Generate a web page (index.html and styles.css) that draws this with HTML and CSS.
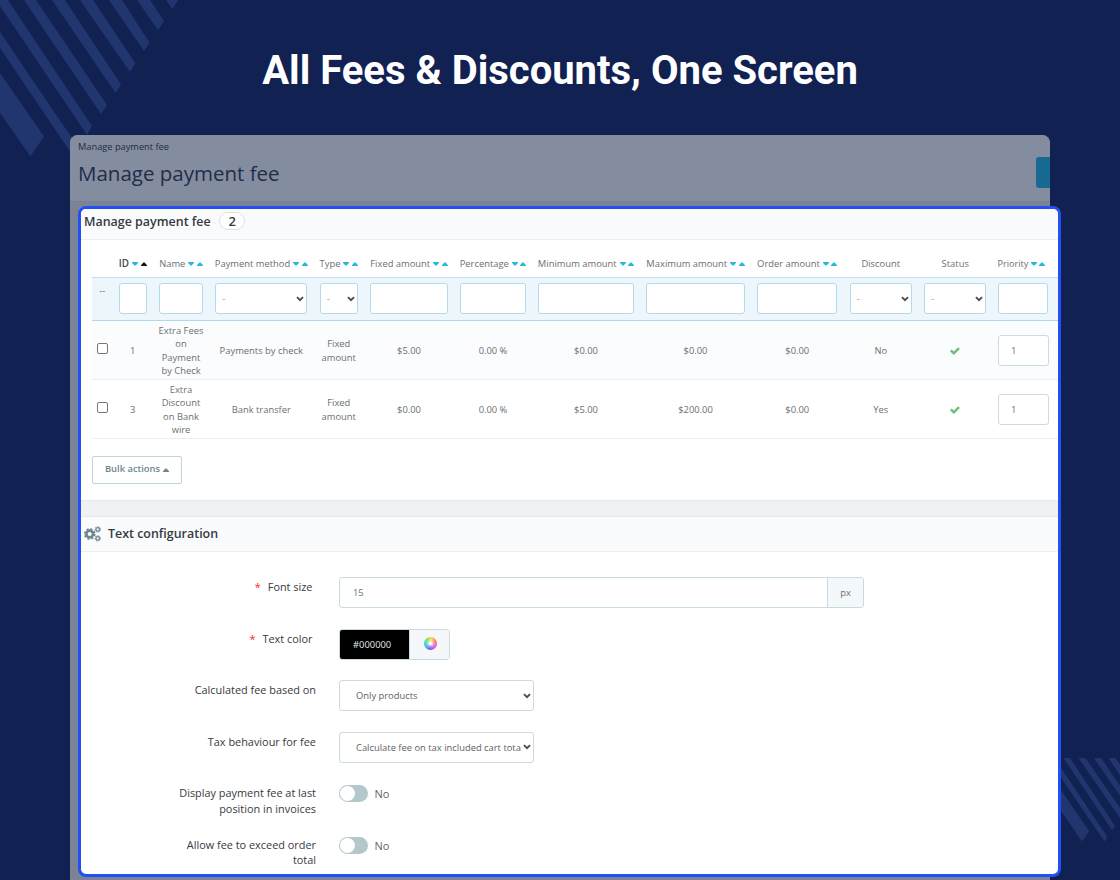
FILE: index.html
```html
<!DOCTYPE html>
<html lang="en">
<head>
<meta charset="utf-8">
<title>All Fees &amp; Discounts, One Screen</title>
<link rel="stylesheet" href="styles.css">
</head>
<body>
<svg width="0" height="0" class="defs">
  <symbol id="down" viewBox="0 0 6 4"><path d="M0 0H6V.7L3.6 3.6H2.4L0 .7Z"/></symbol>
  <symbol id="up" viewBox="0 0 6 4"><path d="M0 4H6V3.3L3.6 .4H2.4L0 3.3Z"/></symbol>
  <symbol id="chev" viewBox="0 0 8 6"><path d="M1 1.2L4 4.2L7 1.2" fill="none" stroke="#4a4d50" stroke-width="1.9"/></symbol>
  <symbol id="check" viewBox="0 0 10 8"><path d="M0 4.3L1.7 2.6L3.8 4.6L8.2 .3L9.9 1.9L3.8 7.9Z"/></symbol>
</svg>
<main class="stage">
  <svg class="stripes" width="1120" height="880" viewBox="0 0 1120 880">
    <path d="M0 73L44 136.500L30.500 156.500L0 113ZM0 32L78 147L73 156L0 48ZM0 0H8L92 126L87 135L0 6ZM24 0H36L107 105L101 114ZM52 0H65L121 84.500L115.500 93ZM80 0H93L135.500 63.500L130 72ZM109 0H122L149.500 42.500L144 51ZM137 0H150L164 21L158 30ZM166 0H178L172.500 9Z"/>
    <path d="M1055 781L1089 831L1082 841.500L1055 802ZM1055 759L1107.500 837L1104.500 841.500L1055 769ZM1063.500 758H1070L1115 826L1112 830ZM1078.500 758H1085.500L1120 808V818ZM1094 758H1101L1120 786V796ZM1108.500 758H1115.500L1120 764.500V775Z"/>
  </svg>
  <h1 class="headline">All Fees &amp; Discounts, One Screen</h1>
  <section class="backdrop">
    <header class="page-head">
      <div>
        <div class="crumb">Manage payment fee</div>
        <div class="page-title">Manage payment fee</div>
      </div>
      <div class="page-btn"></div>
    </header>
  </section>
  <section class="card">
    <div class="panel-head">Manage payment fee<span class="count">2</span></div>
    <div class="list">
      <div class="row thead">
        <div></div>
        <div class="sorted">ID<svg><use href="#down"/></svg><svg class="dark"><use href="#up"/></svg></div>
        <div>Name<svg><use href="#down"/></svg><svg><use href="#up"/></svg></div>
        <div>Payment method<svg><use href="#down"/></svg><svg><use href="#up"/></svg></div>
        <div>Type<svg><use href="#down"/></svg><svg><use href="#up"/></svg></div>
        <div>Fixed amount<svg><use href="#down"/></svg><svg><use href="#up"/></svg></div>
        <div>Percentage<svg><use href="#down"/></svg><svg><use href="#up"/></svg></div>
        <div>Minimum amount<svg><use href="#down"/></svg><svg><use href="#up"/></svg></div>
        <div>Maximum amount<svg><use href="#down"/></svg><svg><use href="#up"/></svg></div>
        <div>Order amount<svg><use href="#down"/></svg><svg><use href="#up"/></svg></div>
        <div>Discount</div>
        <div>Status</div>
        <div class="last prio">Priority<svg><use href="#down"/></svg><svg><use href="#up"/></svg></div>
      </div>
      <div class="row filters">
        <div class="dashes">--</div>
        <div><span class="field"></span></div>
        <div><span class="field"></span></div>
        <div><span class="field pick">-<svg><use href="#chev"/></svg></span></div>
        <div><span class="field pick">-<svg><use href="#chev"/></svg></span></div>
        <div><span class="field"></span></div>
        <div><span class="field"></span></div>
        <div><span class="field"></span></div>
        <div><span class="field"></span></div>
        <div><span class="field"></span></div>
        <div><span class="field pick">-<svg><use href="#chev"/></svg></span></div>
        <div><span class="field pick">-<svg><use href="#chev"/></svg></span></div>
        <div class="last"><span class="field"></span></div>
      </div>
      <div class="row item odd">
        <div class="tick"><span class="box"></span></div>
        <div>1</div>
        <div>Extra Fees<br>on<br>Payment<br>by Check</div>
        <div>Payments by check</div>
        <div>Fixed<br>amount</div>
        <div>$5.00</div>
        <div>0.00 %</div>
        <div>$0.00</div>
        <div>$0.00</div>
        <div>$0.00</div>
        <div>No</div>
        <div><svg class="check"><use href="#check"/></svg></div>
        <div class="last"><span class="order">1</span></div>
      </div>
      <div class="row item">
        <div class="tick"><span class="box"></span></div>
        <div>3</div>
        <div>Extra<br>Discount<br>on Bank<br>wire</div>
        <div>Bank transfer</div>
        <div>Fixed<br>amount</div>
        <div>$0.00</div>
        <div>0.00 %</div>
        <div>$5.00</div>
        <div>$200.00</div>
        <div>$0.00</div>
        <div>Yes</div>
        <div><svg class="check"><use href="#check"/></svg></div>
        <div class="last"><span class="order">1</span></div>
      </div>
      <div class="bulk">Bulk actions<svg><use href="#up"/></svg></div>
    </div>
    <div class="gap"></div>
    <div class="panel-head config">
      <svg class="gears" viewBox="0 0 17 16">
        <g fill="none" stroke="#6c868e">
          <circle cx="5.700" cy="8" r="3.400" stroke-width="2.700"/>
          <circle cx="5.700" cy="8" r="5.100" stroke-width="1.500" stroke-dasharray="2.200 1.805"/>
          <circle cx="13.700" cy="3.400" r="1.800" stroke-width="1.300"/>
          <circle cx="13.700" cy="3.400" r="2.800" stroke-width=".9" stroke-dasharray="1.250 1.265"/>
          <circle cx="13.700" cy="12.400" r="1.800" stroke-width="1.300"/>
          <circle cx="13.700" cy="12.400" r="2.800" stroke-width=".9" stroke-dasharray="1.250 1.265"/>
        </g>
      </svg>Text configuration</div>
    <div class="form">
      <div class="frow"><label class="req"><i>*</i>Font size</label><div class="group wide"><span class="input">15</span><span class="addon">px</span></div></div>
      <div class="frow"><label class="req"><i>*</i>Text color</label><div class="group"><span class="swatch">#000000</span><span class="addon wheelbox"><span class="wheel"></span></span></div></div>
      <div class="frow"><label>Calculated fee based on</label><div class="select"><span>Only products</span><svg><use href="#chev"/></svg></div></div>
      <div class="frow"><label>Tax behaviour for fee</label><div class="select"><span>Calculate fee on tax included cart tota</span><svg><use href="#chev"/></svg></div></div>
      <div class="frow"><label>Display payment fee at last<br>position in invoices</label><div class="switch"><span class="track"><span class="knob"></span></span>No</div></div>
      <div class="frow"><label>Allow fee to exceed order<br>total</label><div class="switch"><span class="track"><span class="knob"></span></span>No</div></div>
    </div>
  </section>
</main>
</body>
</html>
```
FILE: styles.css
```css
* { box-sizing: border-box; }
body { margin: 0; font-family: "Open Sans", sans-serif; }
.defs { position: absolute; }
.stage { position: relative; width: 1120px; height: 880px; overflow: hidden; background: #112151; padding-top: 46px; }
.stripes { position: absolute; left: 0; top: 0; fill: #21356f; }
.headline { position: relative; margin: 0; height: 89px; text-align: center; color: #fff; font: 700 40px/50px Roboto, sans-serif; white-space: nowrap; }
.backdrop { position: relative; width: 980px; height: 745px; margin-left: 70px; background: #7b8396; border-radius: 8px 8px 0 0; overflow: hidden; }
.page-head { height: 67px; background: #848c9f; border-bottom: 1px solid #777f92; display: flex; justify-content: space-between; padding: 5px 0 0 8px; color: #222d48; }
.crumb { font-size: 9.25px; line-height: 13px; }
.page-title { font-size: 20.5px; line-height: 30px; margin-top: 5px; }
.page-btn { width: 14px; height: 31px; margin-top: 17px; background: #176b93; border-radius: 3px 0 0 3px; }

/* Highlighted card floating above the dimmed page */
.card { position: absolute; left: 78px; top: 206px; width: 983px; height: 671px; border: 3px solid #2250f4; border-radius: 8px; background: #fff; overflow: hidden; }
.panel-head { display: flex; align-items: center; height: 30.5px; padding: 0 0 5px 3px; background: #fafbfc; border-bottom: 1px solid #eaf0f1; color: #363a41; font-size: 12.45px; font-weight: 600; }
.count { display: flex; align-items: center; justify-content: center; width: 26px; height: 18px; margin-left: 8.500px; border: 1px solid #dddfe0; border-radius: 9px; background: #fff; font-size: 13px; }
.list { height: 260px; padding: 11px 0 0 11px; }
.row { display: grid; grid-template-columns: 20.5px 40.5px 56px 104.500px 50.500px 90px 78px 108px 111px 92.500px 74.500px 74.500px 66px; align-items: center; text-align: center; color: #6b6f72; font-size: 9.4px; line-height: 13.500px; }
.row > div { padding: 0 6.250px; }
.row > .last { padding-left: 5.500px; padding-right: 10.500px; }
.thead { height: 26.500px; white-space: nowrap; }
.thead > div { display: flex; justify-content: center; align-items: center; padding: 0; }
.thead svg { flex: none; width: 6px; height: 4px; margin-left: 3px; fill: #25b9d7; }
.thead svg + svg { margin-left: 2.500px; }
.thead svg.dark { fill: #111; }
.row > .prio { padding: 0 8px 0 0; justify-content: center; font-size: 9.100px; }
.prio svg + svg { margin-left: 2px; }
.sorted { font-weight: 600; color: #44484c; font-size: 9.900px; }
.filters { height: 43.500px; background: #ecf6fb; border-top: 1.500px solid #bddff0; border-bottom: 1px solid #aedaee; }
.row > .dashes { padding: 6px 0 0; align-self: start; }
.field { display: block; height: 31px; background: #fff; border: 1px solid #b3dbee; border-radius: 3px; }
.pick { display: flex; justify-content: space-between; align-items: center; padding: 0 2px 0 6px; color: #999da0; }
.pick svg { width: 8px; height: 6px; }
.item { height: 59px; border-bottom: 1px solid #eceef0; white-space: nowrap; }
.row.item > div { padding: 2px 0 0; }
.odd { background: #fbfcfe; }
.row.item > .last { padding: 1.500px 9.500px 0 5px; }
.box { display: block; width: 11px; height: 11px; margin: -4px auto 0; border: 1px solid #767676; border-radius: 2px; background: #fff; }
.check { display: block; width: 10px; height: 8px; margin: auto; fill: #6cc07a; }
.order { display: flex; align-items: center; height: 31px; padding-left: 12.500px; border: 1px solid #cbdde1; border-radius: 3px; background: #fff; }
.bulk { display: flex; align-items: center; justify-content: center; width: 90px; height: 28px; margin-top: 17px; padding-bottom: 1.500px; border: 1px solid #c0d5db; border-radius: 2px; color: #6c868e; font-size: 9.400px; font-weight: 600; }
.bulk svg { width: 6px; height: 4px; margin: 2px 0 0 3px; fill: #6c868e; }
.gap { height: 17px; background: #eff1f2; border-top: 1px solid #e5e7e9; border-bottom: 1px solid #e5e7e9; }
.config { height: 35.500px; padding-bottom: 0; }
.gears { width: 17px; height: 16px; margin-right: 7px; }

.form { padding-top: 25px; }
.frow { display: grid; grid-template-columns: 235px auto; justify-content: start; column-gap: 23px; height: 51.500px; align-items: start; }
label { padding-top: 2px; text-align: right; color: #363a41; font-size: 10.900px; line-height: 15.500px; }
.req { padding-right: 3.500px; }
.req i { color: #f22; font-style: normal; margin-right: 7px; }
.group { display: flex; height: 31px; border: 1px solid #c9dbe0; border-radius: 3px; overflow: hidden; color: #6b6f72; font-size: 9.400px; }
.wide { width: 525px; }
.input { flex: 1; padding-left: 13px; line-height: 29px; }
.addon { width: 36px; border-left: 1px solid #c9dbe0; background: #f4f8fb; text-align: center; line-height: 29px; }
.swatch { width: 69px; background: #000; color: #e4e7ea; line-height: 30px; padding-left: 13px; }
.wheelbox { display: flex; width: 40px; align-items: center; justify-content: center; }
.wheel { width: 13px; height: 13px; margin: 0 0 1px 1px; border-radius: 50%; background: radial-gradient(circle, #fff 8%, #ffffff60 35%, transparent 68%), conic-gradient(#ffd43e, #ff784f 60deg, #ef55a0 105deg, #c045f0 145deg, #5750ee 190deg, #3ca8f1 240deg, #39dcaa 290deg, #80df43 330deg, #ffd43e); }
.select { display: flex; align-items: center; width: 195px; height: 31px; padding: 0 2px 0 16px; border: 1px solid #c9dbe0; border-radius: 3px; color: #5f6366; font-size: 9.400px; }
.select span { flex: 1; white-space: nowrap; }
.select svg { flex: none; width: 8px; height: 6px; margin-left: 2px; }
.switch { display: flex; align-items: center; height: 17px; margin-top: 2px; color: #5f6468; font-size: 11px; }
.track { display: flex; width: 28.500px; height: 17px; margin-right: 7px; border-radius: 9px; background: #b3c7cd; padding: 1px; }
.knob { width: 15px; height: 15px; border-radius: 50%; background: #fff; }
```
